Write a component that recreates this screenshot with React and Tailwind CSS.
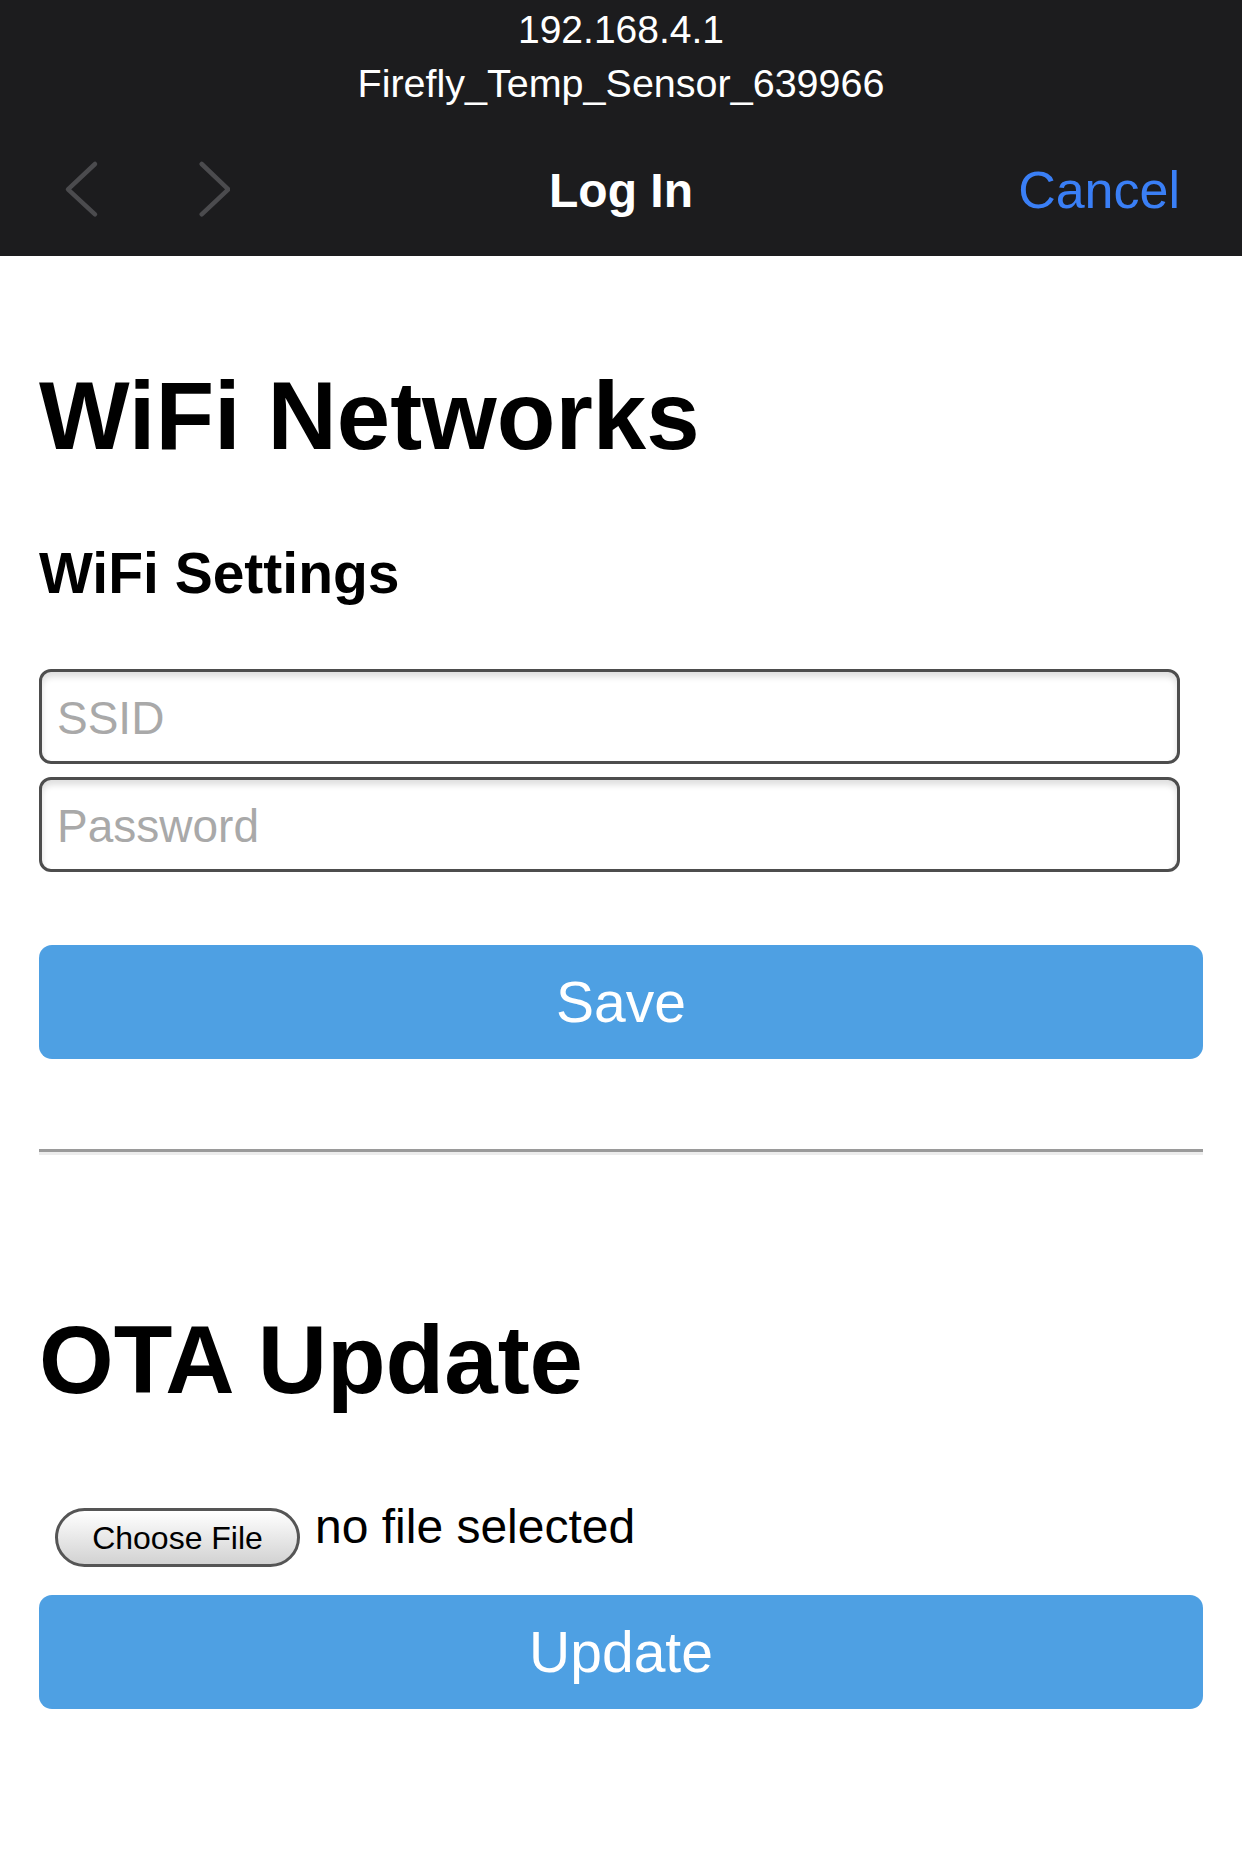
export default function App() {
  return (
    <div className="min-h-[1865px] w-[1242px] bg-white" style={{ fontFamily: '"Liberation Sans", Arial, sans-serif' }}>
      {/* Browser / captive portal header */}
      <div className="flex h-[256px] flex-col bg-[#1c1c1e] text-white">
        <p className="mt-[10px] text-center text-[39px] leading-[39px]">192.168.4.1</p>
        <p className="mt-[15px] text-center text-[39.5px] leading-[39px]">Firefly_Temp_Sensor_639966</p>
        <div className="mt-[47px] grid h-[80px] grid-cols-[1fr_auto_1fr] items-start">
          <div className="flex items-start">
            <svg className="ml-[60px] mt-[10px]" width="40" height="60" viewBox="0 0 40 60" fill="none">
              <path d="M35 4 L8 29.3 L35 54.3" stroke="#4b4b4e" strokeWidth="4.5" strokeLinecap="round" strokeLinejoin="round" />
            </svg>
            <svg className="ml-[90px] mt-[10px]" width="40" height="60" viewBox="0 0 40 60" fill="none">
              <path d="M11.7 4 L38.3 29.3 L11.7 54.3" stroke="#4b4b4e" strokeWidth="4.5" strokeLinecap="round" strokeLinejoin="round" />
            </svg>
          </div>
          <span className="mt-[17px] text-[48px] font-bold leading-[48px]">Log In</span>
          <div className="flex justify-end pr-[62px]">
            <span className="mt-[15px] text-[52px] leading-[51px] text-[#3a7ff6]">Cancel</span>
          </div>
        </div>
      </div>

      {/* Page content */}
      <div className="flex flex-col px-[39px] text-black">
        <h1 className="mt-[112px] text-[96px] font-bold leading-[96px]">WiFi Networks</h1>
        <h3 className="mt-[81px] text-[57px] font-bold leading-[56px]">WiFi Settings</h3>

        <input
          type="text"
          placeholder="SSID"
          className="mt-[68px] box-border h-[95px] w-[1141px] rounded-[12px] border-[3px] border-[#4d4d4d] bg-white pl-[15px] pt-[3px] text-[46px] leading-normal shadow-[inset_0_5px_6px_rgba(0,0,0,0.13)] outline-none placeholder:text-[#a9a9a9]"
        />
        <input
          type="password"
          placeholder="Password"
          className="mt-[13px] box-border h-[95px] w-[1141px] rounded-[12px] border-[3px] border-[#4d4d4d] bg-white pl-[15px] pt-[3px] text-[46px] leading-normal shadow-[inset_0_5px_6px_rgba(0,0,0,0.13)] outline-none placeholder:text-[#a9a9a9]"
        />

        <button className="mt-[73px] flex h-[114px] w-full items-center justify-center rounded-[13px] bg-[#4ea0e3] text-[57px] leading-[57px] text-white">
          Save
        </button>

        <div className="mt-[90px] h-[6px] w-full border-t-[3px] border-b-[3px] border-t-[#9a9a9a] border-b-[#ececec]" />

        <h1 className="mt-[157px] text-[96px] font-bold leading-[96px]">OTA Update</h1>

        <div className="mt-[100px] flex h-[59px] items-start">
          <div className="ml-[16px] flex h-[59px] w-[245px] items-center justify-center rounded-full border-[3px] border-[#555555] bg-gradient-to-b from-white to-[#d2d2d2] text-[32px] leading-[32px] text-black">
            Choose File
          </div>
          <span className="ml-[15px] -mt-[5px] text-[48px] leading-[48px]">no file selected</span>
        </div>

        <button className="mt-[28px] flex h-[114px] w-full items-center justify-center rounded-[13px] bg-[#4ea0e3] text-[57px] leading-[57px] text-white">
          Update
        </button>
      </div>
    </div>
  );
}
